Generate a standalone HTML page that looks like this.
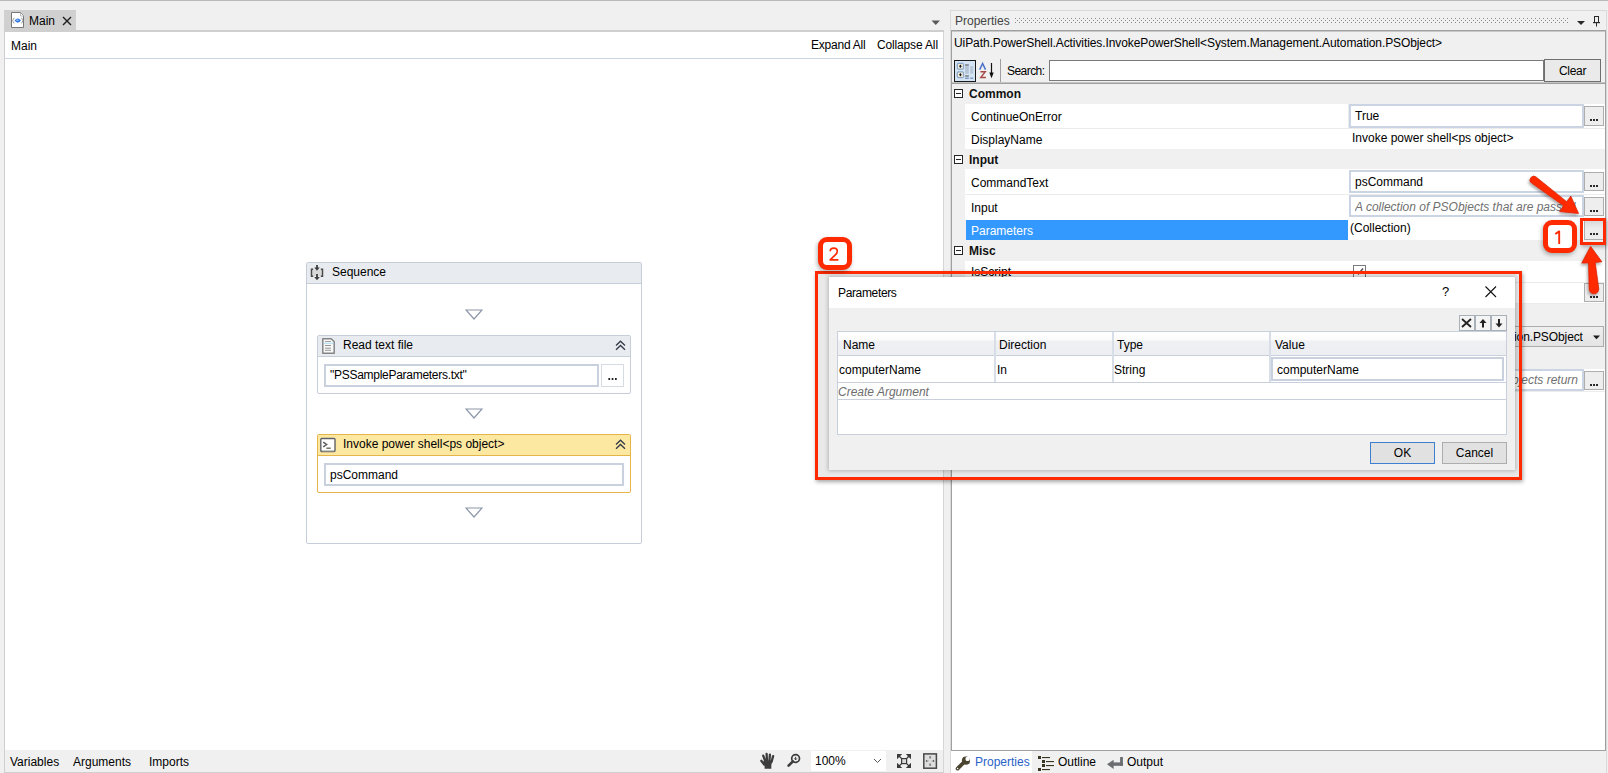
<!DOCTYPE html>
<html><head><meta charset="utf-8">
<style>
*{box-sizing:border-box;margin:0;padding:0}
html,body{width:1608px;height:773px;overflow:hidden;background:#f0f0f0;font-family:"Liberation Sans",sans-serif;font-size:12px;color:#000;position:relative}
.a{position:absolute}
.t{position:absolute;white-space:pre;line-height:14px}
.topline{left:0;top:0;width:1608px;height:1px;background:#b9b9b9}
/* document panel */
.tab{left:4px;top:10px;width:72px;height:21px;background:#d0d0d0}
.hdrline{left:4px;top:30px;width:940px;height:2px;background:#cfcfcf}
.doc{left:4px;top:32px;width:940px;height:741px;background:#fff;border-left:1px solid #cfcfcf;border-right:1px solid #d6d6d6}
.bc{left:5px;top:58px;width:938px;height:1px;background:#ccd5e4}
.bbar{left:5px;top:750px;width:938px;height:22px;background:#f0f0f0}
.bbarline{left:4px;top:772px;width:940px;height:1px;background:#cfcfcf}
/* properties */
.pouter{left:950px;top:10px;width:657px;height:763px;border:1px solid #d9d9d9;border-bottom:none;background:#f0f0f0}
.pinner{left:951px;top:30px;width:655px;height:721px;border:1px solid #a0a0a0;box-shadow:inset 0 1px 0 #c8c8c8;background:#f0f0f0}

.gripper{left:1014px;top:18px;width:554px;height:7px;background-image:radial-gradient(circle at 1px 1px,#b8b8b8 0.8px,transparent 1px);background-size:4px 4px;opacity:.9}
.catbtn{left:954px;top:60px;width:22px;height:22px;border:1px solid #1a1a1a;background:#d5e4f5}
.vsep{left:1000px;top:59px;width:1px;height:23px;background:#a0a0a0}
.search{left:1049px;top:60px;width:495px;height:21px;background:#fff;border:1px solid #7a7a7a}
.clear{left:1544px;top:59px;width:57px;height:23px;background:#eaeaea;border:1px solid #6f6f6f}
.psep{left:952px;top:82px;width:653px;height:2px;background:linear-gradient(#c4c4c4 50%,#a0a0a0 50%)}
.grp{left:952px;width:653px;height:21px;background:#f0f0f0}
.minus{width:9px;height:9px;border:1px solid #262626;background:#fff}
.minus:after{content:"";position:absolute;left:1px;top:3px;width:5px;height:1px;background:#262626}
.row{left:965px;width:640px;background:#fff}
.rsep{left:965px;width:640px;height:1px;background:#ececec}
.vbox{left:1349px;width:235px;border:2px solid #cbd4e2;background:#fff}
.dots{width:20px;border:1px solid #adadad;background:#eeeeee}
.dots:after{content:"";position:absolute;left:5px;top:12px;width:8px;height:2px;background:linear-gradient(90deg,transparent 0 .2px,#2a2a2a .2px 1.8px,transparent 1.8px 3.2px,#2a2a2a 3.2px 4.8px,transparent 4.8px 6.2px,#2a2a2a 6.2px 7.8px,transparent 7.8px)}

.seq{left:306px;top:262px;width:336px;height:282px;border:1px solid #c6ceda;border-radius:2px;background:#fff}
.seqhdr{left:307px;top:263px;width:334px;height:21px;background:#e8ebef;border-bottom:1px solid #c6ceda}
.act{left:317px;width:314px;border:1px solid #c6ceda;border-radius:2px;background:#fff}
.acthdr{left:318px;width:312px;height:20px;background:#e8ebef;border-bottom:1px solid #c6ceda}
.tbox{border:2px solid #c9d1de;background:#fff}

.dlgshadow{left:818px;top:274px;width:701px;height:203px;background:rgba(0,0,0,.085)}
.dlg{left:829px;top:277px;width:686px;height:193px;background:#f0f0f0;box-shadow:0 0 4px 1px rgba(0,0,0,.22)}
.dlgtitle{left:829px;top:277px;width:686px;height:31px;background:#fff}
.grid{left:837px;top:331px;width:670px;height:104px;border:1px solid #c8d0dc;background:#fff}
.ghdr{left:838px;top:332px;width:668px;height:24px;background:linear-gradient(#ffffff 0,#fbfbfc 35%,#eef0f3 40%,#eceef2 100%);border-bottom:1px solid #c9d0dc}
.gvl{width:2px;background:#d8dee8}
.btn{height:22px;border:1px solid #adadad;background:#e1e1e1;text-align:center;line-height:20px}
.red{border-color:#ff2a00}
</style></head>
<body>
<div class="a topline"></div>

<!-- Document tab -->
<div class="a tab"></div>
<div class="a hdrline"></div>
<div class="t" style="left:29px;top:14px">Main</div>
<div class="a doc"></div>
<div class="t" style="left:11px;top:39px">Main</div>
<div class="t" style="left:811px;top:38px;letter-spacing:-0.23px">Expand All</div>
<div class="t" style="left:877px;top:38px;letter-spacing:-0.15px">Collapse All</div>
<div class="a bc"></div>
<div class="a bbar"></div>
<div class="a bbarline"></div>
<div class="t" style="left:10px;top:755px">Variables</div>
<div class="t" style="left:73px;top:755px">Arguments</div>
<div class="t" style="left:149px;top:755px">Imports</div>


<!-- designer -->
<div class="a seq"></div>
<div class="a seqhdr"></div>
<div class="t" style="left:332px;top:265px">Sequence</div>
<svg class="a" style="left:465px;top:309px" width="18" height="12"><path d="M1 1H17L9 10Z" fill="none" stroke="#8b96a8" stroke-width="1.2"/></svg>
<div class="a act" style="top:335px;height:59px"></div>
<div class="a acthdr" style="top:336px;height:21px"></div>
<div class="t" style="left:343px;top:338px">Read text file</div>
<div class="a tbox" style="left:324px;top:364px;width:275px;height:23px"></div>
<div class="t" style="left:330px;top:368px;letter-spacing:-0.28px">"PSSampleParameters.txt"</div>
<div class="a" style="left:601px;top:364px;width:23px;height:23px;border:1px solid #d5dae3;background:#fff"></div>
<svg class="a" style="left:608px;top:378px" width="9" height="2"><rect x="0.4" width="1.7" height="2" fill="#1e1e1e"/><rect x="3.7" width="1.7" height="2" fill="#1e1e1e"/><rect x="7" width="1.7" height="2" fill="#1e1e1e"/></svg>
<svg class="a" style="left:465px;top:408px" width="18" height="12"><path d="M1 1H17L9 10Z" fill="none" stroke="#8b96a8" stroke-width="1.2"/></svg>
<div class="a act" style="top:434px;height:59px;border-color:#e6b54a;background:#fff"></div>
<div class="a acthdr" style="top:435px;height:21px;background:#fde8a1;border-bottom-color:#e6b54a"></div>
<div class="t" style="left:343px;top:437px">Invoke power shell&lt;ps object&gt;</div>
<div class="a tbox" style="left:324px;top:463px;width:300px;height:23px"></div>
<div class="t" style="left:330px;top:468px">psCommand</div>
<svg class="a" style="left:465px;top:507px" width="18" height="12"><path d="M1 1H17L9 10Z" fill="none" stroke="#8b96a8" stroke-width="1.2"/></svg>

<!-- Properties panel -->
<div class="a pouter"></div>
<div class="t" style="left:955px;top:14px;color:#444">Properties</div>
<div class="a pinner"></div>
<div class="t" style="left:954px;top:36px;letter-spacing:-0.09px">UiPath.PowerShell.Activities.InvokePowerShell&lt;System.Management.Automation.PSObject&gt;</div>


<svg class="a" style="left:1015px;top:18px" width="553" height="5"><defs><pattern id="gp" width="4" height="4" patternUnits="userSpaceOnUse"><rect x="0" y="0" width="1" height="1" fill="#8c8c8c"/><rect x="2" y="2" width="1" height="1" fill="#8c8c8c"/></pattern></defs><rect width="553" height="5" fill="url(#gp)"/></svg>
<svg class="a" style="left:1577px;top:21px" width="8" height="4"><path d="M0 0H8L4 4Z" fill="#2a2a2a"/></svg>
<svg class="a" style="left:1592px;top:16px" width="9" height="11"><path d="M2 0H7V6H2Z M3 1V6H6V1Z" fill="#2a2a2a" fill-rule="evenodd"/><rect x="1" y="6" width="7" height="1.2" fill="#2a2a2a"/><rect x="4" y="7" width="1" height="3.5" fill="#2a2a2a"/></svg>

<div class="a catbtn"></div>
<div class="a vsep"></div>
<div class="t" style="left:1007px;top:64px;letter-spacing:-0.55px">Search:</div>
<div class="a search"></div>
<div class="a clear"></div>
<div class="t" style="left:1559px;top:64px;letter-spacing:-0.3px">Clear</div>
<div class="a psep"></div>

<div class="a grp" style="top:84px;height:20px"></div>
<div class="a minus" style="left:954px;top:89px"></div>
<div class="t" style="left:969px;top:87px;font-weight:bold;color:#111">Common</div>
<div class="a row" style="top:104px;height:24px"></div>
<div class="a rsep" style="top:128px"></div>
<div class="a" style="left:1348px;top:104px;width:1px;height:45px;background:#ebebeb"></div>
<div class="a" style="left:1348px;top:169px;width:1px;height:51px;background:#ebebeb"></div>
<div class="a" style="left:1348px;top:261px;width:1px;height:42px;background:#ebebeb"></div>
<div class="t" style="left:971px;top:110px">ContinueOnError</div>
<div class="a vbox" style="left:1349px;top:104px;height:24px"></div>
<div class="t" style="left:1355px;top:109px">True</div>
<div class="a dots" style="left:1584px;top:106px;height:20px"></div>
<div class="a row" style="top:129px;height:20px"></div>
<div class="t" style="left:971px;top:133px">DisplayName</div>
<div class="t" style="left:1352px;top:131px">Invoke power shell&lt;ps object&gt;</div>

<div class="a grp" style="top:149px;height:20px"></div>
<div class="a minus" style="left:954px;top:155px"></div>
<div class="t" style="left:969px;top:153px;font-weight:bold;color:#111">Input</div>
<div class="a row" style="top:169px;height:25px"></div>
<div class="a rsep" style="top:194px"></div>
<div class="t" style="left:971px;top:176px">CommandText</div>
<div class="a vbox" style="top:170px;height:23px"></div>
<div class="t" style="left:1355px;top:175px">psCommand</div>
<div class="a dots" style="left:1584px;top:172px;height:19px"></div>
<div class="a row" style="top:195px;height:25px"></div>
<div class="t" style="left:971px;top:201px">Input</div>
<div class="a vbox" style="top:195px;height:22px"></div>
<div class="t" style="left:1355px;top:200px;font-style:italic;color:#707070;width:226px;overflow:hidden">A collection of PSObjects that are passed</div>
<div class="a dots" style="left:1584px;top:197px;height:19px"></div>
<div class="a" style="left:966px;top:220px;width:382px;height:20px;background:#3399ff"></div>
<div class="a row" style="left:1348px;top:220px;width:257px;height:20px"></div>
<div class="t" style="left:971px;top:224px;color:#fff">Parameters</div>
<div class="t" style="left:1350px;top:221px">(Collection)</div>
<div class="a dots" style="left:1584px;top:220px;height:20px;background:linear-gradient(#d9d9d9,#ececec 40%)"></div>

<div class="a grp" style="top:240px;height:21px"></div>
<div class="a minus" style="left:954px;top:246px"></div>
<div class="t" style="left:969px;top:244px;font-weight:bold;color:#111">Misc</div>
<div class="a row" style="top:261px;height:21px"></div>
<div class="a rsep" style="top:282px"></div>
<div class="t" style="left:971px;top:265px">IsScript</div>
<div class="a row" style="top:283px;height:20px"></div>
<div class="a rsep" style="top:303px"></div>
<div class="a dots" style="left:1584px;top:283px;height:19px"></div>
<div class="a" style="left:1500px;top:326px;width:104px;height:21px;background:linear-gradient(#efefef,#e3e3e3);border:1px solid #acacac"></div>
<div class="t" style="left:1514px;top:330px;letter-spacing:-0.1px">ion.PSObject</div>
<svg class="a" style="left:1593px;top:335px" width="8" height="5"><path d="M0 0.5H7L3.5 4.2Z" fill="#1a1a1a"/></svg>
<div class="a row" style="top:369px;height:22px"></div>
<div class="a rsep" style="top:391px"></div>
<div class="a vbox" style="left:1500px;top:369px;width:84px;height:22px"></div>
<div class="t" style="left:1512px;top:373px;font-style:italic;color:#707070">bjects return</div>
<div class="a dots" style="left:1584px;top:371px;height:19px"></div>
<div class="a" style="left:952px;top:392px;width:653px;height:358px;background:#fff"></div>


<!-- tab icon & close -->
<svg class="a" style="left:11px;top:12px" width="14" height="17">
<path d="M0.5 0.5H9.5L12.5 3.5V15.5H0.5Z" fill="#fff" stroke="#777" stroke-width="1"/>
<path d="M9.5 0.8V4H12.7" fill="#fff" stroke="#aaa" stroke-width=".8"/>
<path d="M3.2 5.8L1.6 8.6L3.2 11.4M10.4 5.8L12 8.6L10.4 11.4" fill="none" stroke="#8a8a8a" stroke-width=".9"/>
<path d="M3.5 8.6Q6.8 4.4 10 8.6Q6.8 12.8 3.5 8.6Z" fill="#2d74e0"/>
<ellipse cx="6.4" cy="8.2" rx="1.4" ry="1" fill="#7fb2f5"/>
</svg>
<svg class="a" style="left:62px;top:16px" width="10" height="10"><path d="M1 1L9 9M9 1L1 9" stroke="#1e1e1e" stroke-width="1.4"/></svg>
<svg class="a" style="left:931px;top:20px" width="10" height="6"><path d="M0.5 0.5H9L4.75 5Z" fill="#595959"/></svg>

<!-- properties toolbar icons -->
<svg class="a" style="left:955px;top:61px" width="20" height="20">
<rect x="2.3" y="2.3" width="6.2" height="5.8" rx="1.2" fill="#f3ead8" stroke="#8aa6c4" stroke-width="1.2"/>
<rect x="2.3" y="10.9" width="6.2" height="5.8" rx="1.2" fill="#f3ead8" stroke="#8aa6c4" stroke-width="1.2"/>
<path d="M5.4 3.5L6.7 5.2L5.4 6.9L4.1 5.2ZM5.4 12.1L6.7 13.8L5.4 15.5L4.1 13.8Z" fill="#111"/>
<rect x="10.1" y="3" width="3.7" height="2" fill="#8e949c"/>
<rect x="10.1" y="5" width="3.7" height="7.7" fill="#b5c4d6"/>
<rect x="10.1" y="14" width="3.7" height="2" fill="#8e949c"/>
<rect x="10.1" y="16.5" width="3.7" height="1.5" fill="#7f9cc8"/>
<rect x="15.2" y="5" width="3" height="7.7" fill="#b8c7d8"/>
<rect x="15.2" y="16.5" width="3" height="1.5" fill="#7f9cc8"/>
</svg>
<svg class="a" style="left:978px;top:61px" width="18" height="19">
<path d="M1.7 8.6L4.6 2.4L7.5 8.6" fill="none" stroke="#4a72c8" stroke-width="1.5"/>
<path d="M2.4 10.7H7.3L2.7 16.5H7.9" fill="none" stroke="#a84a4a" stroke-width="1.4"/>
<path d="M13.5 2V14" stroke="#111" stroke-width="1.2"/>
<path d="M11.3 11.5L13.5 17.3L15.7 11.5Z" fill="#111"/>
</svg>

<!-- designer icons -->
<svg class="a" style="left:310px;top:264px" width="14" height="17">
<rect x="2.5" y="6" width="9" height="6" fill="#d9d9d9"/>
<path d="M3.2 5.3H1.5V12.3H3.2M10.8 5.3H12.5V12.3H10.8" fill="none" stroke="#4a4a4a" stroke-width="1.5"/>
<path d="M7 1V4.5M7 10V13.5" stroke="#3e3e3e" stroke-width="1.8"/>
<path d="M4.2 3.6L7 6.8L9.8 3.6ZM4.2 13L7 16.2L9.8 13Z" fill="#3e3e3e"/>
</svg>
<svg class="a" style="left:321px;top:337px" width="15" height="18">
<path d="M1.8 1.8H10.2L13.2 4.8V16.2H1.8Z" fill="#f8f8f8" stroke="#858585" stroke-width="1.5" stroke-linejoin="round"/>
<path d="M4 4.5H10" stroke="#8a8a8a" stroke-width=".8"/>
<path d="M2.5 6.3H12.5" stroke="#a9dcf2" stroke-width="1"/>
<path d="M4 8.5H10M4 11.2H10M4 13.3H10" stroke="#8a8a8a" stroke-width=".9"/>
</svg>
<svg class="a" style="left:614px;top:339px" width="14" height="13"><path d="M2 6.5L6.5 2.2L11 6.5M2 10.8L6.5 6.5L11 10.8" fill="none" stroke="#333a48" stroke-width="1.3"/></svg>
<svg class="a" style="left:319px;top:437px" width="18" height="16">
<rect x="1.8" y="1.5" width="14.2" height="13" rx="1" fill="#fff" stroke="#5f6268" stroke-width="1.4"/>
<path d="M3.2 14.2H15" stroke="#a79f86" stroke-width=".8"/>
<path d="M4.2 5.2L7.6 7.5L4.2 9.8" fill="none" stroke="#5a5a5a" stroke-width="1.5"/>
<path d="M7.3 11.2H11.7" stroke="#6a6a5a" stroke-width="1.4"/>
</svg>
<svg class="a" style="left:614px;top:438px" width="14" height="13"><path d="M2 6.5L6.5 2.2L11 6.5M2 10.8L6.5 6.5L11 10.8" fill="none" stroke="#333a48" stroke-width="1.3"/></svg>

<!-- IsScript checkbox -->
<div class="a" style="left:1353px;top:265px;width:13px;height:13px;border:1px solid #7a7a7a;background:#fff"></div>
<svg class="a" style="left:1354px;top:266px" width="11" height="11"><path d="M2 5.5L4.5 8L9 2.5" fill="none" stroke="#555" stroke-width="1.5"/></svg>

<!-- bottom zoom bar -->
<svg class="a" style="left:759px;top:752px" width="16" height="18">
<path d="M2.3 8.8L5.2 12.6M4.2 3.6L6.4 9.5M7.6 1.8L8 9M10.9 2.6L10.4 9M14.1 4.1L12.6 9.8" stroke="#3c3c3c" stroke-width="2.3" stroke-linecap="round"/>
<path d="M5 8.5H13.5L12.3 13.2V16.7H5.6V13.4L3.5 11Z" fill="#3c3c3c"/>
</svg>
<svg class="a" style="left:786px;top:752px" width="16" height="17">
<circle cx="9.6" cy="6.5" r="3.9" fill="none" stroke="#3c3c3c" stroke-width="1.7"/>
<path d="M6.9 9.4L2.6 13.7" stroke="#3c3c3c" stroke-width="2.6" stroke-linecap="round"/>
<path d="M9.6 4.8V7.6M8.3 6.4L9.6 7.9L10.9 6.4" fill="none" stroke="#3c3c3c" stroke-width="1"/>
</svg>
<div class="a" style="left:811px;top:751px;width:75px;height:20px;background:#fff"></div>
<div class="t" style="left:815px;top:754px">100%</div>
<svg class="a" style="left:873px;top:758px" width="9" height="6"><path d="M1 1L4.5 4.5L8 1" fill="none" stroke="#555" stroke-width="1"/></svg>
<svg class="a" style="left:896px;top:753px" width="16" height="16">
<rect x="5.6" y="5.6" width="5" height="5" fill="#dadada" stroke="#3a3a3a" stroke-width="1.2"/>
<path d="M1 1H6.2L1 6.2ZM15 1H9.8L15 6.2ZM1 15H6.2L1 9.8ZM15 15H9.8L15 9.8Z" fill="#3a3a3a"/>
<path d="M2.5 2.5L5.3 5.3M13.5 2.5L10.9 5.3M2.5 13.5L5.3 10.9M13.5 13.5L10.9 10.9" stroke="#3a3a3a" stroke-width="1.3"/>
</svg>
<svg class="a" style="left:923px;top:753px" width="15" height="16">
<rect x="0.8" y="0.9" width="12.6" height="14.3" fill="#dedede" stroke="#474747" stroke-width="1.5"/>
<path d="M7.1 3L5.8 4.5H8.4ZM7.1 13L5.8 11.5H8.4ZM2.6 8L4.1 6.7V9.3ZM11.6 8L10.1 6.7V9.3Z" fill="#474747"/>
<path d="M7.1 4.5V6M7.1 10V11.5M4.1 8H5.6M8.6 8H10.1" stroke="#777" stroke-width=".7"/>
</svg>

<!-- bottom properties tabs -->
<div class="a" style="left:952px;top:750px;width:653px;height:1px;background:#a0a0a0"></div>
<div class="a" style="left:951px;top:751px;width:81px;height:22px;background:#fff"></div>
<svg class="a" style="left:954px;top:754px" width="18" height="18">
<path d="M3.6 14.6L10.2 8" stroke="#4a4330" stroke-width="3.8" stroke-linecap="round"/>
<circle cx="12" cy="6.6" r="4.1" fill="#4a4330"/>
<circle cx="13.6" cy="4.9" r="2.2" fill="#fff"/>
<path d="M13.6 2.7L17 0L18 4L15.8 4.9Z" fill="#fff"/>
<circle cx="3.6" cy="14.6" r=".75" fill="#fff"/>
</svg>
<div class="t" style="left:975px;top:755px;color:#2a62c9">Properties</div>
<svg class="a" style="left:1038px;top:756px" width="17" height="16">
<g fill="#3a3520"><rect x="0" y="0" width="3" height="3"/><rect x="4" y="4" width="3" height="3"/><rect x="4" y="8" width="3" height="3"/><rect x="0" y="12" width="3" height="3"/>
<rect x="4" y="1" width="8" height="1.1"/><rect x="8" y="5" width="8" height="1.1"/><rect x="8" y="9" width="8" height="1.1"/><rect x="4" y="13" width="8" height="1.1"/></g>
</svg>
<div class="t" style="left:1058px;top:755px">Outline</div>
<svg class="a" style="left:1106px;top:756px" width="18" height="14"><g fill="#6b6d70"><rect x="14.1" y="1" width="2.8" height="8.8"/><rect x="7" y="6.4" width="9.9" height="3.4"/><path d="M1 8.3L7.6 3.8V12.9Z"/></g></svg>
<div class="t" style="left:1127px;top:755px">Output</div>

<!-- dialog -->
<div class="a dlgshadow"></div>
<div class="a dlg"></div>
<div class="a dlgtitle"></div>
<div class="t" style="left:838px;top:286px;letter-spacing:-0.35px">Parameters</div>
<div class="t" style="left:1442px;top:285px;font-size:13px">?</div>
<svg class="a" style="left:1485px;top:286px" width="12" height="12"><path d="M0.5 0.5L11 11M11 0.5L0.5 11" stroke="#111" stroke-width="1.1"/></svg>
<div class="a" style="left:1459px;top:315px;width:48px;height:16px;border:1px solid #a9b0b7;background:#f4f4f4"></div>
<div class="a" style="left:1474px;top:315px;width:2px;height:16px;background:#a9b0b7"></div>
<div class="a" style="left:1490px;top:315px;width:2px;height:16px;background:#a9b0b7"></div>
<svg class="a" style="left:1461px;top:318px" width="12" height="10"><path d="M1 1L10 9M10 1L1 9" stroke="#222" stroke-width="1.8"/></svg>
<svg class="a" style="left:1478px;top:318px" width="10" height="10"><path d="M5 1L1.5 5H4V9.5H6V5H8.5Z" fill="#222"/></svg>
<svg class="a" style="left:1494px;top:318px" width="10" height="10"><path d="M5 9.5L1.5 5.5H4V1H6V5.5H8.5Z" fill="#222"/></svg>
<div class="a grid"></div>
<div class="a ghdr"></div>
<div class="a gvl" style="left:994px;top:332px;height:50px"></div>
<div class="a gvl" style="left:1112px;top:332px;height:50px"></div>
<div class="a gvl" style="left:1269px;top:332px;height:50px"></div>
<div class="a" style="left:838px;top:382px;width:668px;height:1px;background:#c9d0dc"></div>
<div class="a" style="left:838px;top:399px;width:668px;height:1px;background:#c9d0dc"></div>
<div class="t" style="left:843px;top:338px">Name</div>
<div class="t" style="left:999px;top:338px">Direction</div>
<div class="t" style="left:1117px;top:338px">Type</div>
<div class="t" style="left:1275px;top:338px">Value</div>
<div class="t" style="left:839px;top:363px">computerName</div>
<div class="t" style="left:997px;top:363px">In</div>
<div class="t" style="left:1114px;top:363px">String</div>
<div class="a tbox" style="left:1271px;top:357px;width:233px;height:24px"></div>
<div class="t" style="left:1277px;top:363px">computerName</div>
<div class="t" style="left:838px;top:385px;font-style:italic;color:#6d6d6d">Create Argument</div>
<div class="a btn" style="left:1370px;top:442px;width:65px;border-color:#3d7fd0">OK</div>
<div class="a btn" style="left:1442px;top:442px;width:65px">Cancel</div>

<!-- annotations -->
<div class="a" style="left:815px;top:271px;width:707px;height:209px;border:3.5px solid #ff2a00;box-shadow:1px 2px 4px rgba(0,0,0,.35)"></div>
<div class="a" style="left:818px;top:237px;width:34px;height:33px;border:5px solid #ff2a00;border-radius:9px;background:#fff;box-shadow:-1px 2px 4px rgba(0,0,0,.3)"></div>
<svg class="a" style="left:829px;top:247px" width="11" height="15"><path d="M1.2 4.3 Q1.3 1.2 4.8 1.2 Q8.3 1.2 8.3 4.3 Q8.3 6.3 5.8 8.4 L1.2 12.9 H9.4" fill="none" stroke="#ff2a00" stroke-width="1.7" stroke-linejoin="round"/></svg>
<div class="a" style="left:1543px;top:220px;width:34px;height:33px;border:5px solid #ff2a00;border-radius:9px;background:#fff;box-shadow:-1px 2px 4px rgba(0,0,0,.3)"></div>
<svg class="a" style="left:1554px;top:230px" width="9" height="15"><path d="M1.3 4 L5.2 1.4 V14" fill="none" stroke="#ff2a00" stroke-width="1.9" stroke-linejoin="round"/></svg>
<div class="a" style="left:1580px;top:218px;width:26px;height:27px;border:3px solid #ff2a00;box-shadow:1px 2px 4px rgba(0,0,0,.3)"></div>
<svg class="a" style="left:1520px;top:165px" width="88" height="140">
<defs><filter id="sh" x="-20%" y="-20%" width="140%" height="140%"><feDropShadow dx="-1" dy="2" stdDeviation="1.5" flood-color="#000" flood-opacity=".35"/></filter></defs>
<path filter="url(#sh)" d="M16.08 11.96 L46.76 36.67 L50.8 31 L58.6 48.5 L39.6 46.5 L43.64 40.83 L11.52 18.04 A3.8 3.8 0 0 1 16.08 11.96Z" fill="#ff2a00" stroke="#d42000" stroke-width=".7" stroke-linejoin="round"/>
<path filter="url(#sh)" d="M70.6 81.3 L81.9 96.8 L75.2 97.4 L78.8 124 A4.8 4.8 0 0 1 69.2 124 L68.5 97.9 L61.8 98.1Z" fill="#ff2a00" stroke="#d42000" stroke-width=".7" stroke-linejoin="round"/>
</svg>
</body></html>
